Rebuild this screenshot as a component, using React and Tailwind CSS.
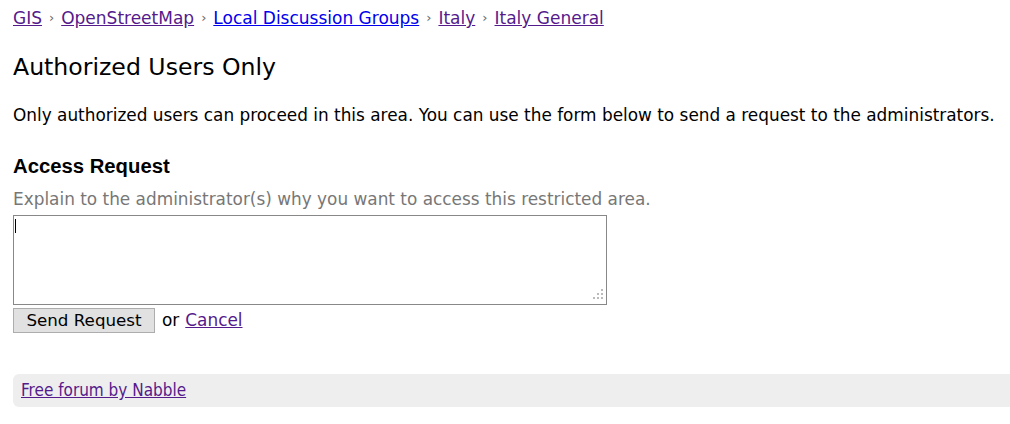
import React from 'react';

const crumbs = [
  { label: 'GIS', visited: true },
  { label: 'OpenStreetMap', visited: true },
  { label: 'Local Discussion Groups', visited: false },
  { label: 'Italy', visited: true },
  { label: 'Italy General', visited: true },
];

const grip = [
  [8, 0],
  [4, 4], [8, 4],
  [0, 8], [4, 8], [8, 8],
];

export default function App() {
  return (
    <div className="min-h-[424px] bg-white pl-[13px] pt-[7px] text-black" style={{ fontFamily: '"DejaVu Sans", Verdana, sans-serif' }}>
      <div className="flex items-center text-[17px] leading-[22px]">
        {crumbs.map((c, i) => (
          <React.Fragment key={c.label}>
            {i > 0 && <span className="mx-[7px] text-[13px] text-[#666]">›</span>}
            <a className={c.visited ? 'text-[#551a8b] underline' : 'text-[#0000ee] underline'}>{c.label}</a>
          </React.Fragment>
        ))}
      </div>

      <h1 className="mt-[23px] text-[23.6px] leading-[30px]">Authorized Users Only</h1>

      <p className="mt-[22px] text-[16.9px] leading-[22px]">
        Only authorized users can proceed in this area. You can use the form below to send a request to the administrators.
      </p>

      <h2 className="mt-[28px] text-[20.3px] font-bold leading-[24px]" style={{ fontFamily: '"Liberation Sans", Arial, sans-serif' }}>
        Access Request
      </h2>

      <div className="mt-[10px] text-[16.9px] leading-[22px] text-[#777]">
        Explain to the administrator(s) why you want to access this restricted area.
      </div>

      <div className="relative mt-[5px] h-[90px] w-[594px]">
        <textarea className="block h-full w-full resize-none border border-[#888] p-[2px] text-[13px] outline-none" />
        <span className="absolute left-[2px] top-[4px] h-[14px] w-px bg-black" />
        {grip.map(([x, y]) => (
          <span key={`${x}-${y}`} className="absolute h-[2px] w-[2px] bg-[#bbb]" style={{ right: 12 - x, bottom: 14 - y }} />
        ))}
      </div>

      <div className="mt-[3px] flex items-center text-[16.9px]">
        <button className="h-[25px] w-[142px] border border-[#adadad] bg-[#e1e1e1] text-[16.7px] leading-none">Send Request</button>
        <span className="ml-[7px]">or</span>
        <a className="ml-[6px] text-[#551a8b] underline">Cancel</a>
      </div>

      <div className="mt-[41px] flex h-[33px] items-center rounded-l-[6px] bg-[#eeeeee] pl-[8px]">
        <a className="text-[17px] text-[#551a8b] underline" style={{ fontFamily: '"DejaVu Sans Condensed", "DejaVu Sans", sans-serif' }}>
          Free forum by Nabble
        </a>
      </div>
    </div>
  );
}
